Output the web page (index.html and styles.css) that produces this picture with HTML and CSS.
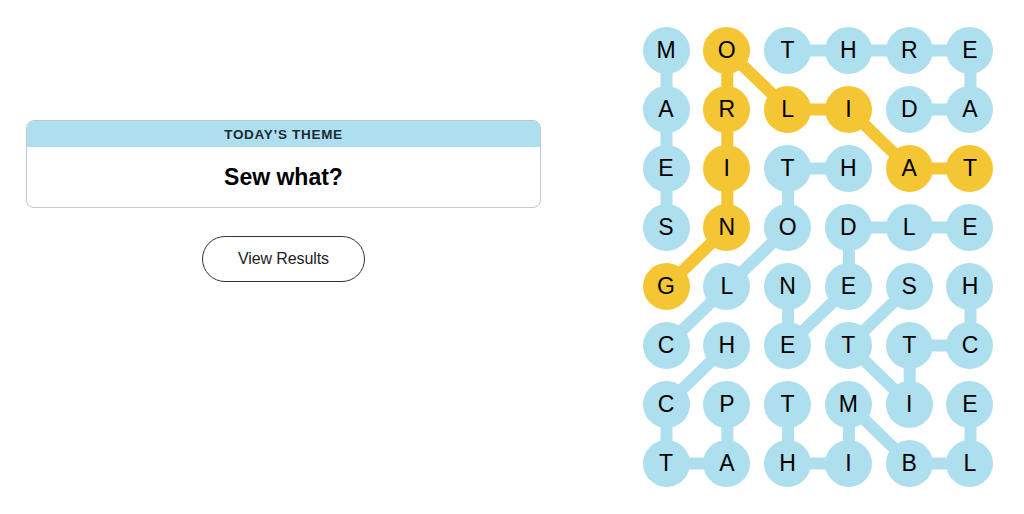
FILE: index.html
```html
<!DOCTYPE html>
<html lang="en">
<head>
<meta charset="utf-8">
<title>Strands</title>
<link rel="stylesheet" href="styles.css">
</head>
<body>
<main class="page">
  <section class="panel">
    <div class="theme-card">
      <div class="theme-head">TODAY’S THEME</div>
      <div class="theme-body">Sew what?</div>
    </div>
    <button class="results-btn" type="button">View Results</button>
  </section>
  <section class="board">
    <svg class="links" width="351" height="460" viewBox="0 0 351 460" aria-hidden="true">
      <g class="found">
        <polyline points="23.5,23.5 23.5,82.5 23.5,141.5 23.5,200.5"/>
        <polyline points="145.1,23.5 205.9,23.5 266.7,23.5 327.5,23.5 327.5,82.5 266.7,82.5"/>
        <polyline points="23.5,318.5 84.3,259.5 145.1,200.5 145.1,141.5 205.9,141.5"/>
        <polyline points="145.1,259.5 145.1,318.5 205.9,259.5 205.9,200.5 266.7,200.5 327.5,200.5"/>
        <polyline points="266.7,259.5 205.9,318.5 266.7,377.5 266.7,318.5 327.5,318.5 327.5,259.5"/>
        <polyline points="84.3,377.5 84.3,436.5 23.5,436.5 23.5,377.5 84.3,318.5"/>
        <polyline points="145.1,377.5 145.1,436.5 205.9,436.5 205.9,377.5 266.7,436.5 327.5,436.5 327.5,377.5"/>
      </g>
      <g class="spangram">
        <polyline points="327.5,141.5 266.7,141.5 205.9,82.5 145.1,82.5 84.3,23.5 84.3,82.5 84.3,141.5 84.3,200.5 23.5,259.5"/>
      </g>
    </svg>
    <div class="grid">
      <div class="cell">M</div><div class="cell sp">O</div><div class="cell">T</div><div class="cell">H</div><div class="cell">R</div><div class="cell">E</div>
      <div class="cell">A</div><div class="cell sp">R</div><div class="cell sp">L</div><div class="cell sp">I</div><div class="cell">D</div><div class="cell">A</div>
      <div class="cell">E</div><div class="cell sp">I</div><div class="cell">T</div><div class="cell">H</div><div class="cell sp">A</div><div class="cell sp">T</div>
      <div class="cell">S</div><div class="cell sp">N</div><div class="cell">O</div><div class="cell">D</div><div class="cell">L</div><div class="cell">E</div>
      <div class="cell sp">G</div><div class="cell">L</div><div class="cell">N</div><div class="cell">E</div><div class="cell">S</div><div class="cell">H</div>
      <div class="cell">C</div><div class="cell">H</div><div class="cell">E</div><div class="cell">T</div><div class="cell">T</div><div class="cell">C</div>
      <div class="cell">C</div><div class="cell">P</div><div class="cell">T</div><div class="cell">M</div><div class="cell">I</div><div class="cell">E</div>
      <div class="cell">T</div><div class="cell">A</div><div class="cell">H</div><div class="cell">I</div><div class="cell">B</div><div class="cell">L</div>
    </div>
  </section>
</main>
</body>
</html>
```

FILE: styles.css
```css
* { box-sizing: border-box; }

html, body {
  margin: 0;
  background: #ffffff;
}

body {
  font-family: "Liberation Sans", Arial, sans-serif;
  color: #121212;
}

.page {
  display: flex;
  align-items: flex-start;
  padding: 26.5px 0 0 26px;
}

.panel {
  width: 515px;
  padding-top: 93.5px;
  display: flex;
  flex-direction: column;
  align-items: center;
}

.theme-card {
  width: 100%;
  border: 1px solid #c6c6c6;
  border-radius: 8px;
  overflow: hidden;
}

.theme-head {
  height: 26px;
  background: #aedfee;
  display: flex;
  align-items: center;
  justify-content: center;
  font-size: 13.5px;
  font-weight: 700;
  letter-spacing: 0.7px;
  color: #1c2a34;
}

.theme-body {
  height: 60px;
  display: flex;
  align-items: center;
  justify-content: center;
  font-size: 23px;
  font-weight: 700;
  color: #000;
}

.results-btn {
  margin-top: 28px;
  width: 163px;
  height: 46px;
  border: 1px solid #333;
  border-radius: 23px;
  background: #fff;
  font-family: "Liberation Sans", Arial, sans-serif;
  font-size: 16px;
  color: #222;
  letter-spacing: -0.1px;
  padding: 0;
}

.board {
  position: relative;
  margin-left: 101.5px;
  width: 351px;
  height: 460px;
}

.links {
  position: absolute;
  left: 0;
  top: 0;
}

.links polyline {
  fill: none;
  stroke-width: 12;
  stroke-linejoin: round;
  stroke-linecap: round;
}

.found polyline { stroke: #aedfee; }
.spangram polyline { stroke: #f5c634; }

.grid {
  position: relative;
  display: grid;
  grid-template-columns: repeat(6, 47px);
  grid-auto-rows: 47px;
  column-gap: 13.8px;
  row-gap: 12px;
}

.cell {
  width: 47px;
  height: 47px;
  border-radius: 50%;
  background: #aedfee;
  display: flex;
  align-items: center;
  justify-content: center;
  font-size: 23px;
  color: #000;
  padding-top: 1px;
}

.cell.sp { background: #f5c634; }
```
